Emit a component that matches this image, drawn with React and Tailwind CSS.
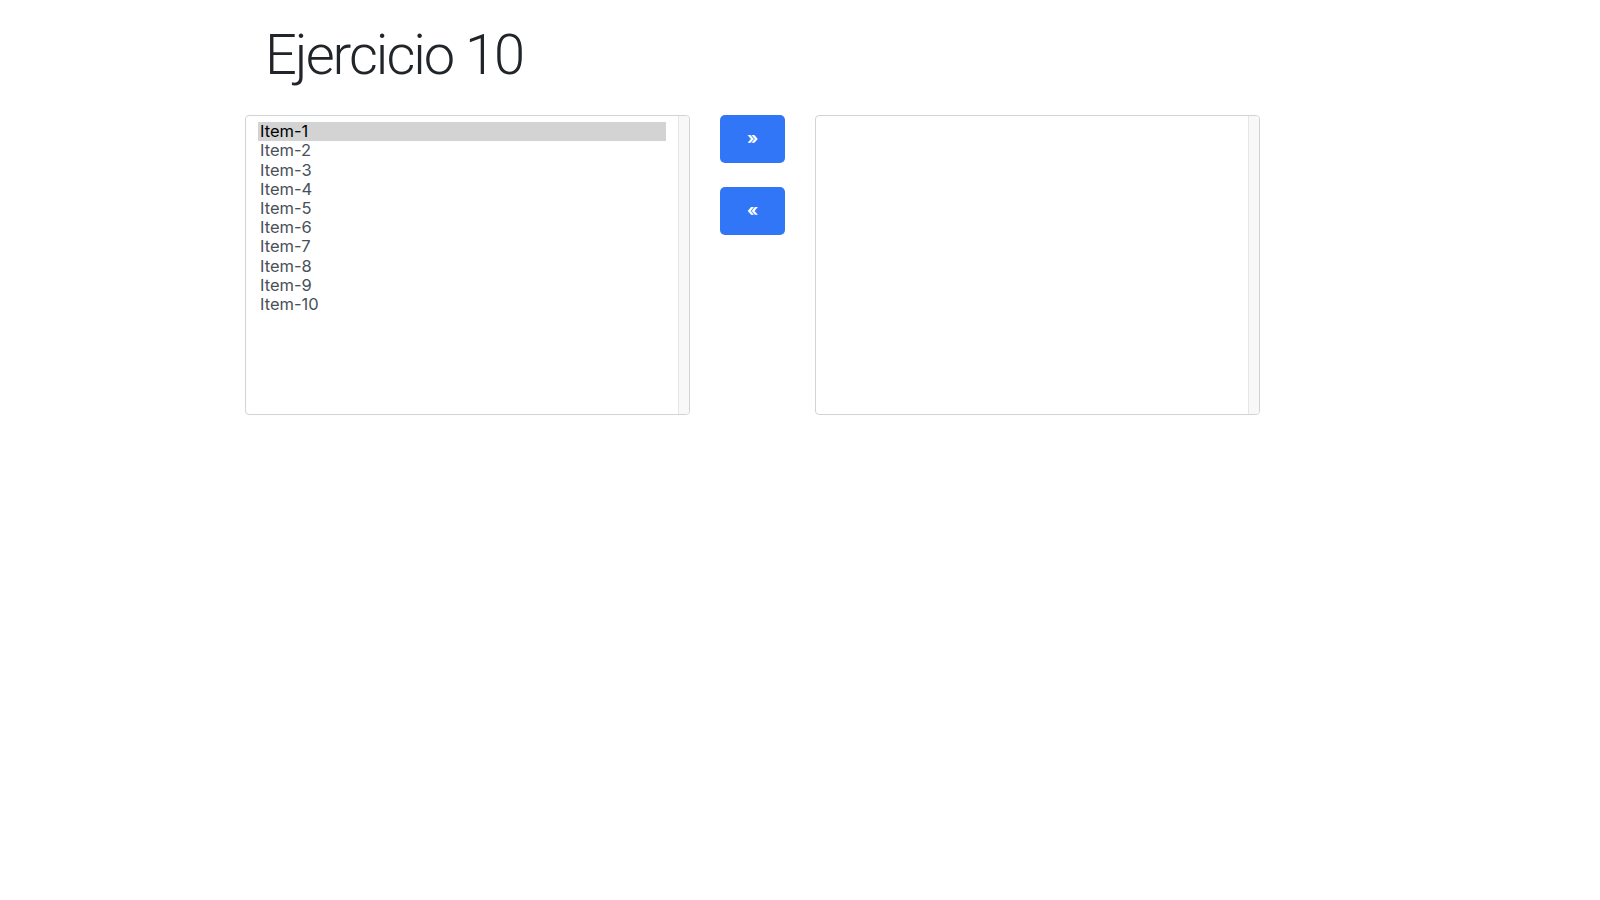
const items = ['Item-1', 'Item-2', 'Item-3', 'Item-4', 'Item-5', 'Item-6', 'Item-7', 'Item-8', 'Item-9', 'Item-10'];

function ListBox({ options, selected }) {
  return (
    <div className="flex h-[300px] overflow-hidden rounded-[4px] border border-[#ced4da] bg-white">
      <div className="flex-1 py-[6px] pl-[12px] pr-[12px]">
        {options.map((opt) => (
          <div
            key={opt}
            className={`h-[19.2px] px-[2px] text-[16.5px] leading-[19.2px] ${opt === selected ? 'bg-[#d3d3d3] text-black' : 'text-[#495057]'}`}
          >
            {opt}
          </div>
        ))}
      </div>
      <div className="w-[11px] border-l border-[#e6e6e6] bg-[#f8f8f8]" />
    </div>
  );
}

export default function App() {
  return (
    <div className="min-h-screen bg-white font-['Inter','Liberation_Sans',sans-serif] text-[#212529]">
      <div className="mx-auto w-[1140px] px-[15px] pt-[22px]">
        <h1 className="mb-[26px] pl-[20px] font-['Roboto','Liberation_Sans',sans-serif] text-[56px] font-light leading-[1.2] tracking-[-2px]">Ejercicio 10</h1>
        <div className="flex gap-[30px]">
          <div className="w-[445px]">
            <ListBox options={items} selected="Item-1" />
          </div>
          <div className="flex w-[65px] flex-col gap-[24px]">
            <button className="h-[48px] w-[65px] rounded-[5px] bg-[#3276f8] text-[17px] font-bold text-white">»</button>
            <button className="h-[48px] w-[65px] rounded-[5px] bg-[#3276f8] text-[17px] font-bold text-white">«</button>
          </div>
          <div className="w-[445px]">
            <ListBox options={[]} />
          </div>
        </div>
      </div>
    </div>
  );
}
